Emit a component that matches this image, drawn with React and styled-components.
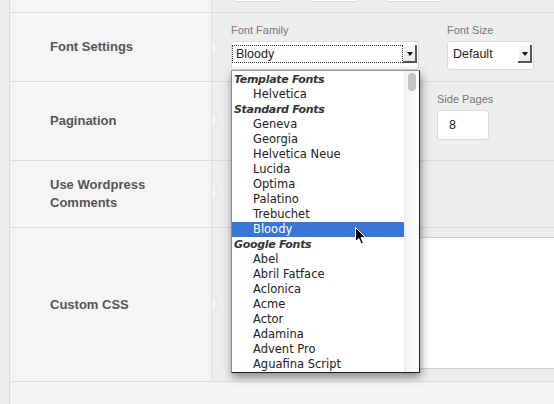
import React from 'react'
import styled, {createGlobalStyle} from 'styled-components'

const GlobalStyle = createGlobalStyle`
  html, body {
    margin: 0;
    padding: 0;
    background: #f4f4f4;
    overflow: hidden;
  }
  body {
    font-family: 'Liberation Sans', Arial, sans-serif;
  }
`

const fonts = [
  {group: 'Template Fonts'},
  {name: 'Helvetica'},
  {group: 'Standard Fonts'},
  {name: 'Geneva'},
  {name: 'Georgia'},
  {name: 'Helvetica Neue'},
  {name: 'Lucida'},
  {name: 'Optima'},
  {name: 'Palatino'},
  {name: 'Trebuchet'},
  {name: 'Bloody', selected: true},
  {group: 'Google Fonts'},
  {name: 'Abel'},
  {name: 'Abril Fatface'},
  {name: 'Aclonica'},
  {name: 'Acme'},
  {name: 'Actor'},
  {name: 'Adamina'},
  {name: 'Advent Pro'},
  {name: 'Aguafina Script'},
]

const Cursor = () => (
  <CursorWrap width="12" height="18" viewBox="0 0 12 18">
    <path
      d="M0.5 0.5 L0.5 14.5 L3.8 11.4 L6.3 17 L8.4 16.1 L6 10.6 L10.6 10.6 Z"
      fill="#000"
      stroke="#fff"
      strokeWidth="1"
      strokeLinejoin="round"
    />
  </CursorWrap>
)

const App = () => {
  return (
    <Page>
      <GlobalStyle />
      <Strip />
      <Main>
        <Row $h={13}>
          <LabelCell />
          <TopFields>
            <Input $w={51} />
            <Input $w={50} />
            <Input $w={58} />
          </TopFields>
        </Row>

        <Row $h={69} $raised>
          <LabelCell $arrow>Font Settings</LabelCell>
          <FieldCell>
            <Field>
              <FieldLabel>Font Family</FieldLabel>
              <Select $w={188}>
                <SelectValue $focused>Bloody</SelectValue>
                <SelectButton />
                <Dropdown>
                  <List>
                    {fonts.map((f, i) =>
                      f.group ? (
                        <GroupItem key={i}>{f.group}</GroupItem>
                      ) : (
                        <OptionItem key={i} $selected={f.selected}>
                          {f.name}
                        </OptionItem>
                      ),
                    )}
                  </List>
                  <ScrollTrack>
                    <ScrollThumb />
                  </ScrollTrack>
                  <Cursor />
                </Dropdown>
              </Select>
            </Field>
            <Field>
              <FieldLabel>Font Size</FieldLabel>
              <Select $w={87}>
                <SelectValue>Default</SelectValue>
                <SelectButton />
              </Select>
            </Field>
          </FieldCell>
        </Row>

        <Row $h={79}>
          <LabelCell $arrow>Pagination</LabelCell>
          <FieldCell>
            {/* field hidden under the open list */}
            <Field>
              <FieldLabel>&nbsp;</FieldLabel>
              <Select $w={178}>
                <SelectValue />
                <SelectButton />
              </Select>
            </Field>
            <Field>
              <FieldLabel>Side Pages</FieldLabel>
              <Input $w={52}>8</Input>
            </Field>
          </FieldCell>
        </Row>

        <Row $h={67}>
          <LabelCell $arrow>
            <LabelText>Use Wordpress Comments</LabelText>
          </LabelCell>
          <FieldCell />
        </Row>

        <Row $h={154}>
          <LabelCell $arrow>Custom CSS</LabelCell>
          <CssCell>
            <CodeBox />
          </CssCell>
        </Row>

        <Footer />
      </Main>
    </Page>
  )
}

const Page = styled.div`
  display: flex;
  width: 554px;
  height: 404px;
  overflow: hidden;
  background: #f4f4f4;
`

const Strip = styled.div`
  width: 9px;
  flex: none;
  background: #efefef;
  border-right: 1px solid #dcdcdc;
`

const Main = styled.div`
  flex: 1;
  display: flex;
  flex-direction: column;
  min-width: 0;
`

const Row = styled.div`
  display: grid;
  grid-template-columns: 202px 1fr;
  height: ${(p) => p.$h}px;
  flex: none;
  box-sizing: border-box;
  border-bottom: 1px solid #dcdcdc;
  position: relative;
  z-index: ${(p) => (p.$raised ? 5 : 1)};
`

const LabelCell = styled.div`
  position: relative;
  box-sizing: border-box;
  background: #f5f5f5;
  border-right: 1px solid #e2e2e2;
  padding-left: 40px;
  display: flex;
  align-items: center;
  font-size: 13px;
  font-weight: bold;
  color: #555;
  line-height: 18px;

  ${(p) =>
    p.$arrow &&
    `
    &::before, &::after {
      content: '';
      position: absolute;
      top: 50%;
      width: 0;
      height: 0;
      border-style: solid;
      border-color: transparent;
    }
    &::before {
      right: -8px;
      margin-top: -8px;
      border-width: 8px 0 8px 7px;
      border-left-color: #e2e2e2;
    }
    &::after {
      right: -7px;
      margin-top: -7px;
      border-width: 7px 0 7px 6px;
      border-left-color: #f5f5f5;
    }
  `}
`

const LabelText = styled.span`
  display: block;
  width: 110px;
`

const FieldCell = styled.div`
  background: #eeeeee;
  display: flex;
  align-items: flex-start;
  gap: 28px;
  padding: 11px 0 0 19px;
  min-width: 0;
`

const TopFields = styled.div`
  background: #eeeeee;
  display: flex;
  align-items: flex-end;
  gap: 26px;
  padding: 0 0 10px 20px;
  overflow: hidden;
`

const CssCell = styled.div`
  background: #eeeeee;
  padding: 9px 0 0 19px;
  overflow: hidden;
`

const CodeBox = styled.div`
  width: 360px;
  height: 132px;
  box-sizing: border-box;
  background: #fff;
  border: 1px solid #cfcfcf;
  border-radius: 3px;
`

const Field = styled.div`
  display: flex;
  flex-direction: column;
`

const FieldLabel = styled.div`
  font-size: 11px;
  line-height: 13px;
  color: #777;
  margin-bottom: 4px;
  white-space: nowrap;
`

const Select = styled.div`
  position: relative;
  width: ${(p) => p.$w}px;
  height: 29px;
  box-sizing: border-box;
  background: #fff;
  border: 1px solid #dadada;
  border-radius: 3px;
  display: flex;
  align-items: flex-start;
  padding: 3px 0 0 0;
`

const SelectValue = styled.div`
  flex: 1;
  height: 18px;
  box-sizing: border-box;
  font-size: 12.5px;
  line-height: 18px;
  color: #222;
  outline: ${(p) => (p.$focused ? '1px dotted #333' : 'none')};
  outline-offset: -1px;
  padding-left: ${(p) => (p.$focused ? 4 : 5)}px;
`

const SelectButton = styled.div`
  width: 14px;
  height: 18px;
  flex: none;
  box-sizing: border-box;
  margin-right: 1px;
  background: linear-gradient(#fbfbfb, #e4e4e4);
  box-shadow: inset -2px -2px 0 #555, inset 1px 1px 0 #fff;
  display: flex;
  align-items: center;
  justify-content: center;

  &::after {
    content: '';
    width: 0;
    height: 0;
    margin: 0 1px 0 0;
    border-left: 3px solid transparent;
    border-right: 3px solid transparent;
    border-top: 4px solid #111;
  }
`

const Input = styled.div`
  width: ${(p) => p.$w}px;
  height: 30px;
  flex: none;
  box-sizing: border-box;
  background: #fff;
  border: 1px solid #dadada;
  border-radius: 3px;
  padding-left: 11px;
  font-size: 12.5px;
  line-height: 28px;
  color: #222;
`

const Dropdown = styled.div`
  position: absolute;
  left: -1px;
  top: calc(100% + 1px);
  width: 189px;
  height: 303px;
  box-sizing: border-box;
  background: #fff;
  border: 1px solid #222;
  border-left-color: #8a8a8a;
  border-top-color: #9a9a9a;
  box-shadow: 1px 4px 9px rgba(0, 0, 0, 0.45);
  display: flex;
  z-index: 10;
`

const List = styled.div`
  flex: 1;
  padding-top: 1px;
  overflow: hidden;
  font-family: 'DejaVu Sans', 'Liberation Sans', sans-serif;
  font-size: 11.5px;
  color: #222;
`

const GroupItem = styled.div`
  height: 15px;
  line-height: 15px;
  padding-left: 2px;
  font-weight: bold;
  font-style: italic;
  font-size: 11px;
  letter-spacing: -0.3px;
  color: #333;
`

const OptionItem = styled.div`
  height: 15px;
  line-height: 15px;
  padding-left: 21px;
  white-space: nowrap;
  background: ${(p) => (p.$selected ? '#3875d7' : 'transparent')};
  color: ${(p) => (p.$selected ? '#fff' : '#222')};
`

const ScrollTrack = styled.div`
  width: 14px;
  flex: none;
  background: linear-gradient(90deg, #f2f2f2, #fcfcfc);
  border-left: 1px solid #e6e6e6;
  position: relative;
`

const ScrollThumb = styled.div`
  position: absolute;
  left: 3px;
  top: 2px;
  width: 8px;
  height: 18px;
  border-radius: 4px;
  background: #c3c3c3;
`

const CursorWrap = styled.svg`
  position: absolute;
  left: 123px;
  top: 156px;
  pointer-events: none;
`

const Footer = styled.div`
  flex: 1;
  background: #f4f4f4;
`

export default App
